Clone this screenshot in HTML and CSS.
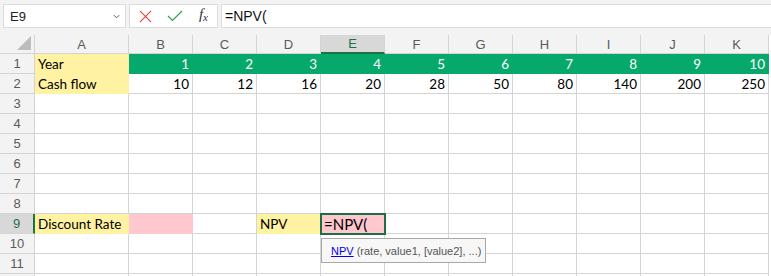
FILE: index.html
```html
<!DOCTYPE html>
<html lang="en">
<head>
  <meta charset="UTF-8">
  <title>NPV</title>
  <link rel="stylesheet" href="styles.css">
</head>
<body>
  <div class="toolbar">
    <div class="namebox">
      <span>E9</span>
      <svg class="chev" viewBox="0 0 8 5"><path d="M1 1l3 3 3-3" fill="none" stroke="#555" stroke-width="1.1"/></svg>
    </div>
    <div class="actions">
      <svg class="icon" viewBox="0 0 14 14"><path d="M1 1l12 12M13 1L1 13" stroke="#e8403b" stroke-width="1.2" fill="none"/></svg>
      <svg class="icon" viewBox="0 0 16 12"><path d="M1 6l4.5 4.5L15 1" stroke="#2aa24a" stroke-width="1.2" fill="none"/></svg>
      <span class="fx">f<sub>x</sub></span>
    </div>
    <div class="formula">=NPV(</div>
  </div>

  <div class="sheet">
    <div class="corner"><span class="tri"></span></div>
    <div class="ch">A</div><div class="ch">B</div><div class="ch">C</div><div class="ch">D</div>
    <div class="ch sel">E</div><div class="ch">F</div><div class="ch">G</div><div class="ch">H</div>
    <div class="ch">I</div><div class="ch">J</div><div class="ch">K</div>

    <div class="rh">1</div>
    <div class="c yellow">Year</div>
    <div class="c green num">1</div><div class="c green num">2</div><div class="c green num">3</div>
    <div class="c green num">4</div><div class="c green num">5</div><div class="c green num">6</div>
    <div class="c green num">7</div><div class="c green num">8</div><div class="c green num">9</div>
    <div class="c green num">10</div>

    <div class="rh">2</div>
    <div class="c yellow">Cash flow</div>
    <div class="c num">10</div><div class="c num">12</div><div class="c num">16</div>
    <div class="c num">20</div><div class="c num">28</div><div class="c num">50</div>
    <div class="c num">80</div><div class="c num">140</div><div class="c num">200</div>
    <div class="c num">250</div>

    <div class="rh">3</div>
    <div class="c"></div><div class="c"></div><div class="c"></div><div class="c"></div><div class="c"></div><div class="c"></div><div class="c"></div><div class="c"></div><div class="c"></div><div class="c"></div><div class="c"></div>
    <div class="rh">4</div>
    <div class="c"></div><div class="c"></div><div class="c"></div><div class="c"></div><div class="c"></div><div class="c"></div><div class="c"></div><div class="c"></div><div class="c"></div><div class="c"></div><div class="c"></div>
    <div class="rh">5</div>
    <div class="c"></div><div class="c"></div><div class="c"></div><div class="c"></div><div class="c"></div><div class="c"></div><div class="c"></div><div class="c"></div><div class="c"></div><div class="c"></div><div class="c"></div>
    <div class="rh">6</div>
    <div class="c"></div><div class="c"></div><div class="c"></div><div class="c"></div><div class="c"></div><div class="c"></div><div class="c"></div><div class="c"></div><div class="c"></div><div class="c"></div><div class="c"></div>
    <div class="rh">7</div>
    <div class="c"></div><div class="c"></div><div class="c"></div><div class="c"></div><div class="c"></div><div class="c"></div><div class="c"></div><div class="c"></div><div class="c"></div><div class="c"></div><div class="c"></div>
    <div class="rh">8</div>
    <div class="c"></div><div class="c"></div><div class="c"></div><div class="c"></div><div class="c"></div><div class="c"></div><div class="c"></div><div class="c"></div><div class="c"></div><div class="c"></div><div class="c"></div>

    <div class="rh sel">9</div>
    <div class="c yellow">Discount Rate</div>
    <div class="c pink"></div>
    <div class="c"></div>
    <div class="c yellow">NPV</div>
    <div class="c pink active">=NPV(
      <div class="tip"><a>NPV</a> (rate, value1, [value2], ...)</div>
    </div>
    <div class="c"></div><div class="c"></div><div class="c"></div><div class="c"></div><div class="c"></div><div class="c"></div>

    <div class="rh">10</div>
    <div class="c"></div><div class="c"></div><div class="c"></div><div class="c"></div><div class="c"></div><div class="c"></div><div class="c"></div><div class="c"></div><div class="c"></div><div class="c"></div><div class="c"></div>
    <div class="rh">11</div>
    <div class="c"></div><div class="c"></div><div class="c"></div><div class="c"></div><div class="c"></div><div class="c"></div><div class="c"></div><div class="c"></div><div class="c"></div><div class="c"></div><div class="c"></div>
    <div class="rh"></div>
    <div class="c"></div><div class="c"></div><div class="c"></div><div class="c"></div><div class="c"></div><div class="c"></div><div class="c"></div><div class="c"></div><div class="c"></div><div class="c"></div><div class="c"></div>
  </div>
</body>
</html>
```

FILE: styles.css
```css
* {
  margin: 0;
  padding: 0;
  box-sizing: border-box;
}

body {
  width: 771px;
  height: 276px;
  overflow: hidden;
  background: #f3f3f3;
  font-family: 'Lato', 'Liberation Sans', sans-serif;
  color: #000;
}

.toolbar {
  display: flex;
  gap: 3px;
  height: 35px;
  padding: 4px 0 7px 3px;
}

.namebox,
.actions,
.formula {
  background: #fff;
  border: 1px solid #dcdcdc;
  display: flex;
  align-items: center;
}

.namebox {
  width: 123px;
  padding: 0 5px 0 6px;
  justify-content: space-between;
  font-family: 'Liberation Sans', sans-serif;
  font-size: 13px;
  color: #222;
}

.chev {
  width: 7px;
  height: 5px;
}

.actions {
  width: 89px;
  padding: 0 9px 0 9px;
  justify-content: space-between;
}

.icon {
  width: 13px;
  height: 13px;
}

.actions .icon + .icon {
  width: 16px;
  height: 12px;
}

.fx {
  font-family: 'Liberation Serif', serif;
  font-style: italic;
  font-size: 15px;
  color: #333;
  margin-bottom: 3px;
}

.fx sub {
  font-size: 11px;
  vertical-align: -2px;
}

.formula {
  flex: 1;
  padding-left: 3px;
  font-family: 'Liberation Sans', sans-serif;
  font-size: 14px;
  color: #111;
  border-right: none;
}

.sheet {
  display: grid;
  grid-template-columns: 35px 94px repeat(10, 64px);
  grid-template-rows: 19px;
  grid-auto-rows: 20px;
  background: #fff;
}

.corner,
.ch,
.rh {
  background: #f3f3f3;
  color: #5a5a5a;
  font-family: 'Liberation Sans', sans-serif;
  font-size: 13px;
  display: flex;
  align-items: center;
  justify-content: center;
  border-right: 1px solid #d4d4d4;
  border-bottom: 1px solid #d4d4d4;
}

.corner {
  position: relative;
}

.tri {
  position: absolute;
  right: 3px;
  bottom: 3px;
  width: 0;
  height: 0;
  border-left: 14px solid transparent;
  border-bottom: 14px solid #bcbcbc;
}

.ch.sel {
  background: #d8d8d8;
  color: #1e7145;
  border-bottom: 2px solid #1e7145;
}

.rh.sel {
  background: #d8d8d8;
  color: #1e7145;
  border-right: 2px solid #1e7145;
}

.c {
  border-right: 1px solid #d4d4d4;
  border-bottom: 1px solid #d4d4d4;
  font-size: 13.5px;
  padding: 0 3px;
  display: flex;
  align-items: center;
  white-space: nowrap;
}

.num {
  justify-content: flex-end;
}

.yellow {
  background: #fff2a3;
  border-color: #fff2a3;
}

.green {
  background: #06a86b;
  border-color: #06a86b;
  color: #fff;
}

.pink {
  background: #ffc7ce;
  border-color: #ffc7ce;
}

.active {
  position: relative;
  outline: 2px solid #1f6e43;
  outline-offset: -1px;
  font-size: 15px;
}

.tip {
  position: absolute;
  left: 0;
  top: 24px;
  width: 165px;
  height: 25px;
  padding-left: 9px;
  display: flex;
  align-items: center;
  white-space: nowrap;
  background: #f7f7f7;
  border: 1px solid #a8a8a8;
  font-family: 'Liberation Sans', sans-serif;
  font-size: 11px;
  color: #555;
  z-index: 2;
}

.tip a {
  color: #0000ee;
  text-decoration: underline;
  margin-right: 3px;
}
```
